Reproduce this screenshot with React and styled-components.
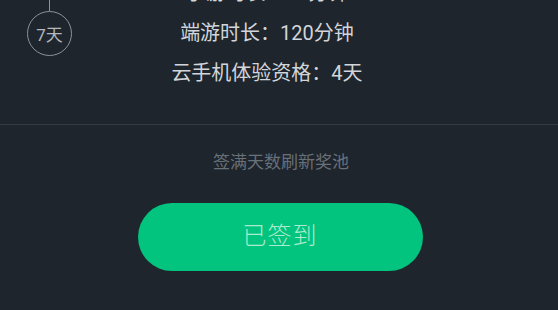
import React from "react";
import styled, { createGlobalStyle } from "styled-components";

const GlobalStyle = createGlobalStyle`
  html, body {
    margin: 0;
    padding: 0;
    background: #1e252d;
  }
  body {
    font-family: Roboto, "Noto Sans CJK SC", sans-serif;
  }
`;

const Page = styled.div`
  width: 558px;
  height: 310px;
  overflow: hidden;
  background: #1e252d;
`;

const RewardRow = styled.div`
  display: flex;
  margin-top: -27px;
  padding-bottom: 31px;
  border-bottom: 1px solid #323c46;
`;

const Timeline = styled.div`
  flex: 0 0 99px;
  display: flex;
  flex-direction: column;
  align-items: center;
`;

const Stem = styled.div`
  width: 1px;
  height: ${(p) => p.h}px;
  background: #8d9298;
`;

const DayBadge = styled.div`
  width: 43px;
  height: 43px;
  border: 1.5px solid #8d9298;
  border-radius: 50%;
  display: flex;
  align-items: center;
  justify-content: center;
  color: #b4b8bd;
  font-size: 17px;
`;

const RewardList = styled.div`
  flex: 0 0 336px;
  display: flex;
  flex-direction: column;
  align-items: center;
`;

const RewardLine = styled.div`
  height: 40px;
  line-height: 40px;
  font-size: 20px;
  color: #d2d5d9;
  white-space: nowrap;
`;

const Hint = styled.div`
  margin-top: 25px;
  text-align: center;
  font-size: 17px;
  line-height: 24px;
  color: #687079;
  padding-left: 4px;
`;

const ButtonWrap = styled.div`
  display: flex;
  justify-content: center;
  margin-top: 29px;
`;

const SignButton = styled.button`
  width: 285px;
  height: 68px;
  margin-left: 2px;
  border: none;
  border-radius: 34px;
  background: #02c47e;
  color: #a9ebcd;
  font-family: inherit;
  font-size: 24px;
  font-weight: 300;
  letter-spacing: 1px;
  padding: 0 0 8px;
  cursor: default;
`;

const rewards = ["手游时长：60分钟", "端游时长：120分钟", "云手机体验资格：4天"];

export default function App() {
  return (
    <Page>
      <GlobalStyle />
      <RewardRow>
        <Timeline>
          <Stem h={38} />
          <DayBadge>7天</DayBadge>
        </Timeline>
        <RewardList>
          {rewards.map((r) => (
            <RewardLine key={r}>{r}</RewardLine>
          ))}
        </RewardList>
      </RewardRow>
      <Hint>签满天数刷新奖池</Hint>
      <ButtonWrap>
        <SignButton>已签到</SignButton>
      </ButtonWrap>
    </Page>
  );
}
